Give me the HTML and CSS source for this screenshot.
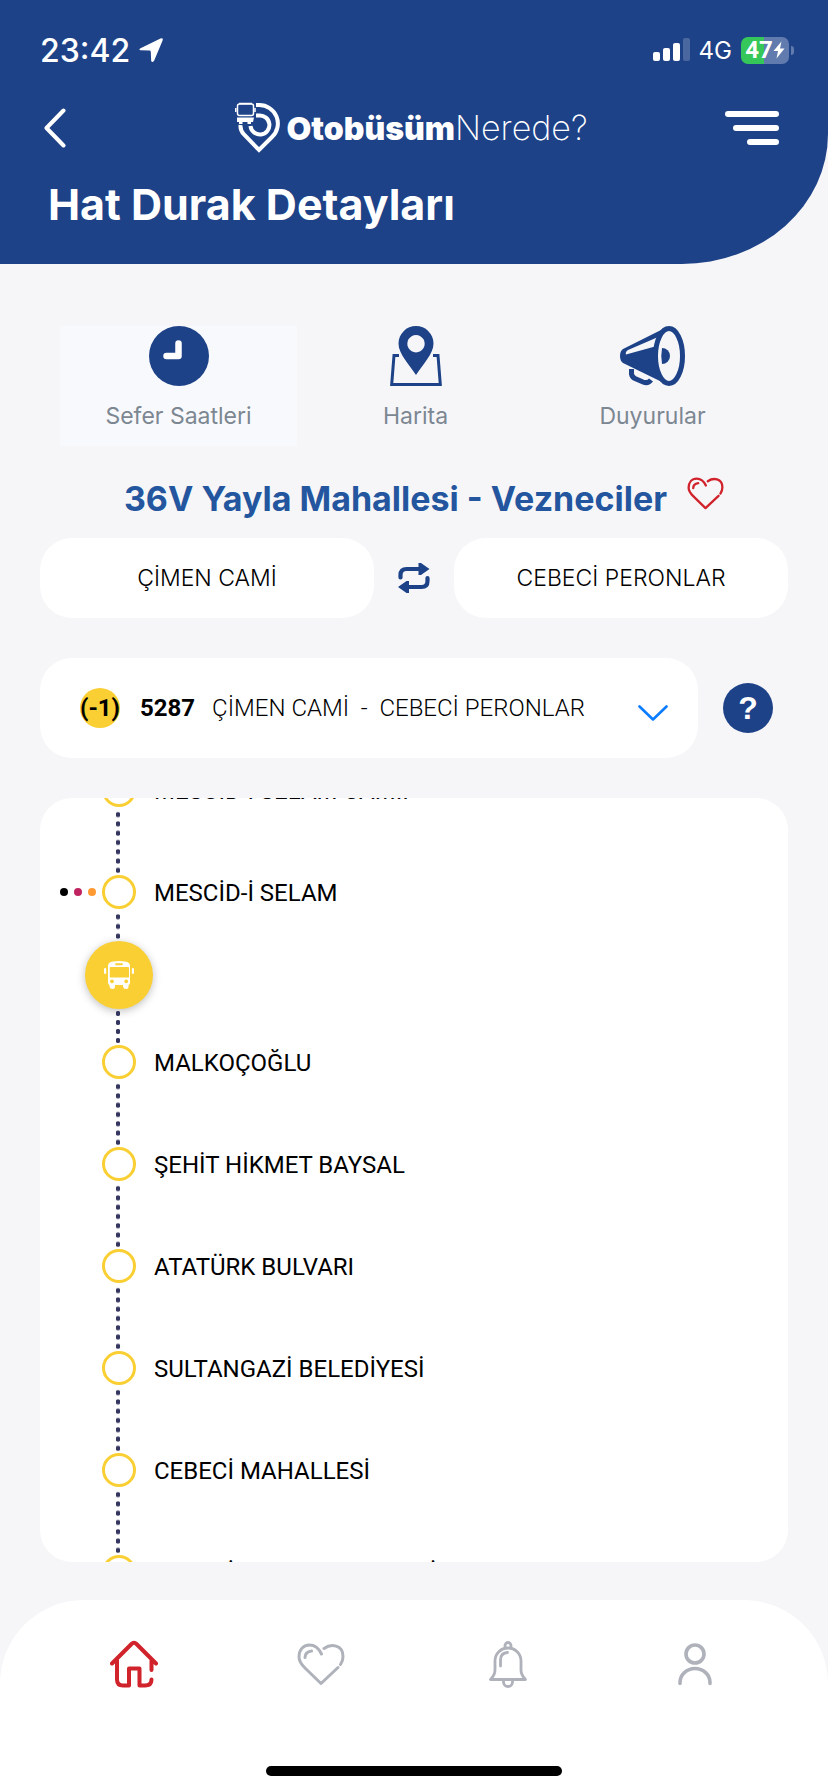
FILE: index.html
```html
<!DOCTYPE html>
<html lang="tr">
<head>
<meta charset="utf-8">
<meta name="viewport" content="width=device-width, initial-scale=1">
<title>Otobüsüm Nerede? – Hat Durak Detayları</title>
<link rel="stylesheet" href="styles.css">
</head>
<body>
<header class="header">
  <div class="status">
    <div class="status-left">
      <span class="clock">23:42</span>
      <svg class="location" width="24" height="24" viewBox="0 0 24 24" aria-hidden="true"><path d="M2 10 21.500 .6Q24.500 -.5 23.600 2.500L15.200 22.600Q14 25 12.200 23.200L11.800 14Q11.800 12.600 10.400 12.600L1.500 12.300Q-1 11.600 2 10Z" fill="#fff"/></svg>
    </div>
    <div class="status-right">
      <svg width="37" height="24" viewBox="0 0 37 24" fill="#fff" aria-hidden="true"><rect y="14" width="7" height="9" rx="2"/><rect x="10" y="10" width="7" height="13" rx="2"/><rect x="20" y="5" width="7" height="18" rx="2"/><rect x="30" width="7" height="23" rx="2" opacity=".2"/></svg>
      <span class="network">4G</span>
      <span class="battery"><span class="battery-level">47</span><svg width="12" height="18" viewBox="0 0 12 18" aria-hidden="true"><path d="M8.500 .5 .5 10H5L3.500 17.500 11.500 7.500H7Z" fill="#fff"/></svg></span>
    </div>
  </div>
  <nav class="topnav" aria-label="Üst menü">
    <button class="icon-button" type="button" aria-label="Geri"><svg width="22" height="40" viewBox="0 0 22 40" fill="none" stroke="#fff" stroke-width="4" stroke-linecap="round" stroke-linejoin="round"><path d="M19.500 2.500 2.500 20 19.500 37.500"/></svg></button>
    <a class="brand" href="#">
      <svg width="46" height="52" viewBox="0 0 46 52" fill="none" stroke="#fff" stroke-width="4" aria-hidden="true">
        <path d="M21 3h3A18.500 18.500 0 0 1 37 35L24 48 9 32.500Q5 28 5.500 23"/>
        <path d="M21 13.500h3A9.500 9.500 0 1 1 15.500 24"/>
        <rect x="2.500" y="2" width="16" height="11.500" rx="2" stroke-width="1.500"/>
        <path d="M.8 6v4M20 6v4M4 1.500h13" stroke-width="1.500"/>
        <path d="M2 15.500h17l-1 4.500h-2v2h-3.500v-2H7.500v2H4v-2H2Z" fill="#fff" stroke="none"/>
      </svg>
      <span class="brand-name"><strong>Otobüsüm</strong>Nerede?</span>
    </a>
    <button class="icon-button" type="button" aria-label="Menü"><svg width="54" height="34" viewBox="0 0 54 34" fill="#fff"><rect width="54" height="6" rx="3"/><rect x="8" y="14" width="46" height="6" rx="3"/><rect x="22" y="28" width="32" height="6" rx="3"/></svg></button>
  </nav>
  <h1 class="page-title">Hat Durak Detayları</h1>
</header>

<main class="main">
  <nav class="links" aria-label="Hat bilgileri">
    <a class="link link-active" href="#">
      <svg width="60" height="60" viewBox="0 0 60 60" aria-hidden="true"><circle cx="30" cy="30" r="30" fill="#1d4288"/><path d="M29.500 17.500V30H17.500" fill="none" stroke="#fff" stroke-width="6.500" stroke-linecap="round" stroke-linejoin="round"/></svg>
      <span>Sefer Saatleri</span>
    </a>
    <a class="link" href="#">
      <svg width="52" height="60" viewBox="0 0 52 60" aria-hidden="true"><path d="M9 29.500H4L1.700 58.500H50.300L48 29.500H43" fill="none" stroke="#1d4288" stroke-width="3"/><path fill="#1d4288" fill-rule="evenodd" d="M26 0A17.500 17.500 0 0 1 43.500 17.500C43.500 28 33 38 26 49 19 38 8.500 28 8.500 17.500A17.500 17.500 0 0 1 26 0ZM26 9a8.700 8.700 0 1 0 .01 0Z"/></svg>
      <span>Harita</span>
    </a>
    <a class="link" href="#">
      <svg width="66" height="60" viewBox="0 0 66 60" aria-hidden="true">
        <path fill="#1d4288" d="M43 3 3 23Q0 25 0 30T3 37L44 57Q37 44 37 30T43 3Z"/>
        <path fill="#f6f6f9" d="M37 11.500 8 24Q5 26 6 28.500L35 20.500Z"/>
        <ellipse cx="49" cy="30" rx="13.500" ry="27.500" fill="#f6f6f9" stroke="#1d4288" stroke-width="5"/>
        <path fill="#1d4288" d="M42 22A8 8 0 0 1 42 38Q40.500 30 42 22Z"/>
        <path d="M11.500 43V48Q12 51 15 52.500L23 56Q28 58 31 54" fill="none" stroke="#1d4288" stroke-width="5"/>
      </svg>
      <span>Duyurular</span>
    </a>
  </nav>

  <div class="route">
    <h2 class="route-name">36V Yayla Mahallesi - Vezneciler</h2>
    <button class="icon-button" type="button" aria-label="Favorilere ekle"><svg width="37" height="33" viewBox="0 0 48 43" fill="none" stroke="#d0232b" stroke-width="3" stroke-linecap="round" stroke-linejoin="round"><path d="M24.500 11C21 3.500 16.500 2 12.500 2 6 2 2 7 2 14 2 19 5 22 8 25L24 40.500 41 24.500M27 5.500C34 .5 46 1.500 46 13.500Q46 18 43.500 21.500M8 14.500Q8 9 14.500 8"/></svg></button>
  </div>

  <div class="direction">
    <button class="card terminal" type="button">ÇİMEN CAMİ</button>
    <button class="icon-button" type="button" aria-label="Yönü değiştir"><svg width="32" height="32" viewBox="0 0 32 32"><path d="M2.500 15.500V13Q2.500 7 8.500 7H21M29.500 16V19Q29.500 25 23.500 25H11" fill="none" stroke="#1d4288" stroke-width="4.200" stroke-linecap="round"/><path d="M20.500 1V13H23L31.500 7 23 1ZM11 19V31H8.500L0 25 8.500 19Z" fill="#1d4288"/></svg></button>
    <button class="card terminal" type="button">CEBECİ PERONLAR</button>
  </div>

  <div class="vehicle">
    <button class="card picker" type="button" aria-haspopup="listbox">
      <span class="delay">(-1)</span>
      <strong class="code">5287</strong>
      <span class="path">ÇİMEN CAMİ&nbsp; -&nbsp; CEBECİ PERONLAR</span>
      <svg class="chevron" width="30" height="16" viewBox="0 0 30 16" fill="none" stroke="#0a7cff" stroke-width="2.600" stroke-linecap="round" stroke-linejoin="round" aria-hidden="true"><path d="M1.500 1.500 15 14.500 28.500 1.500"/></svg>
    </button>
    <button class="help" type="button" aria-label="Yardım">?</button>
  </div>

  <ol class="card stops">
    <li class="stop"><div class="stop-row"><span class="transfers"></span><span class="ring"></span><span class="stop-name">MESCİD-İ SELAM CAMİİ</span></div><div class="dots"></div></li>
    <li class="stop">
      <div class="stop-row"><span class="transfers"><i class="line line-black"></i><i class="line line-pink"></i><i class="line line-orange"></i></span><span class="ring"></span><span class="stop-name">MESCİD-İ SELAM</span></div>
      <div class="dots dots-before-bus"></div>
      <div class="bus"><svg width="30" height="28" viewBox="0 0 30 28" role="img" aria-label="Otobüs"><path fill="#fff" fill-rule="evenodd" d="M9 .5Q15-.5 21 .5 26 1 26 5V21.500Q26 23.500 24.500 24V25.500Q24.500 28 22 28T19 25.500V24H11V25.500Q11 28 8.500 28T5.500 25.500V24Q4 23.500 4 21.500V5Q4 1 9 .5ZM11.500 2.200Q10.800 3.200 11.500 4.200H18.500Q19.200 3.200 18.500 2.200ZM6.500 6Q5.800 6 5.800 7V16.500H25V7Q25 6 24 6ZM8 18.500A1.900 1.900 0 1 0 8.010 18.500ZM22.200 18.500A1.900 1.900 0 1 0 22.210 18.500Z"/><rect y="7" width="2.200" height="6" rx="1.100" fill="#fff"/><rect x="27.800" y="7" width="2.200" height="6" rx="1.100" fill="#fff"/></svg></div>
      <div class="dots dots-after-bus"></div>
    </li>
    <li class="stop"><div class="stop-row"><span class="transfers"></span><span class="ring"></span><span class="stop-name">MALKOÇOĞLU</span></div><div class="dots"></div></li>
    <li class="stop"><div class="stop-row"><span class="transfers"></span><span class="ring"></span><span class="stop-name">ŞEHİT HİKMET BAYSAL</span></div><div class="dots"></div></li>
    <li class="stop"><div class="stop-row"><span class="transfers"></span><span class="ring"></span><span class="stop-name">ATATÜRK BULVARI</span></div><div class="dots"></div></li>
    <li class="stop"><div class="stop-row"><span class="transfers"></span><span class="ring"></span><span class="stop-name">SULTANGAZİ BELEDİYESİ</span></div><div class="dots"></div></li>
    <li class="stop"><div class="stop-row"><span class="transfers"></span><span class="ring"></span><span class="stop-name">CEBECİ MAHALLESİ</span></div><div class="dots"></div></li>
    <li class="stop"><div class="stop-row"><span class="transfers"></span><span class="ring"></span><span class="stop-name">CEBECİ SPOR KOMPLEKSİ</span></div></li>
  </ol>
</main>

<footer class="tabbar">
  <nav class="tabs" aria-label="Ana menü">
    <a class="tab tab-active" href="#" aria-label="Ana sayfa"><svg width="48" height="48" viewBox="0 0 48 48" fill="none" stroke="currentColor" stroke-width="4" stroke-linecap="round" stroke-linejoin="round"><path d="M2 23.500 21.500 4Q24 1.500 26.500 4L46 23.500M7 20V39.500Q7 45.500 13 45.500H19V28.500H29.500V45.500H35Q41.500 45.500 41.500 39.500M41.500 20.500V30"/></svg></a>
    <a class="tab" href="#" aria-label="Favoriler"><svg width="48" height="43" viewBox="0 0 48 43" fill="none" stroke="currentColor" stroke-width="3" stroke-linecap="round" stroke-linejoin="round"><path d="M24.500 11C21 3.500 16.500 2 12.500 2 6 2 2 7 2 14 2 19 5 22 8 25L24 40.500 41 24.500M27 5.500C34 .5 46 1.500 46 13.500Q46 18 43.500 21.500M8 14.500Q8 9 14.500 8"/></svg></a>
    <a class="tab" href="#" aria-label="Bildirimler"><svg width="38" height="47" viewBox="0 0 38 47" fill="none" stroke="currentColor" stroke-width="2.800" stroke-linecap="round" stroke-linejoin="round"><path d="M1.500 38.500H36.500Q32 34 32 29V20A13 13 0 0 0 6 20V29Q6 34 1.500 38.500ZM11.500 25V19Q11.500 12 18.500 11.500M16 6V4.500A3 3 0 0 1 22 4.500V6M14.500 39V41A4.500 4.500 0 0 0 23.500 41V39"/></svg></a>
    <a class="tab" href="#" aria-label="Profil"><svg width="36" height="43" viewBox="0 0 36 43" fill="none" stroke="currentColor" stroke-width="3.600" stroke-linecap="round"><circle cx="18" cy="11" r="9"/><path d="M3 40.500V39.500A15 14 0 0 1 33 39.500V40.500"/></svg></a>
  </nav>
  <div class="home-indicator"></div>
</footer>
</body>
</html>
```

FILE: styles.css
```css
:root {
  --blue: #1d4288;
  --page: #f6f6f9;
  --yellow: #f9cf33;
  --display: "Inter", "Open Sans", sans-serif;
  --body: Roboto, "Noto Sans", sans-serif;
}

* { box-sizing: border-box; }

body {
  margin: 0;
  height: 100vh;
  display: flex;
  flex-direction: column;
  background: var(--page);
  color: #000;
  font-family: var(--body);
  font-size: 24px;
}

button {
  font: inherit;
  color: inherit;
  border: 0;
  margin: 0;
  padding: 0;
  background: none;
}

a { color: inherit; text-decoration: none; }
svg { display: block; flex: none; }

.icon-button { display: flex; align-items: center; justify-content: center; }

.card { background: #fff; border-radius: 32px; }

/* Header */
.header {
  background: var(--blue);
  color: #fff;
  border-bottom-right-radius: 146px 130px;
  font-family: var(--display);
}

.status {
  height: 100px;
  padding: 0 34px 0 40px;
  display: flex;
  align-items: center;
  justify-content: space-between;
}

.status-left { display: flex; align-items: center; gap: 9px; }
.status-right { display: flex; align-items: center; gap: 9px; }
.clock { font-size: 32px; font-weight: 500; }
.network { font-size: 24px; }

.battery {
  position: relative;
  width: 48px;
  height: 27px;
  margin-right: 5px;
  border-radius: 7px;
  background: linear-gradient(90deg, #35c759 48%, #627bae 48%);
  display: flex;
  align-items: center;
  justify-content: center;
}
.battery::after {
  content: "";
  position: absolute;
  right: -5px;
  top: 9px;
  width: 3px;
  height: 9px;
  border-radius: 0 3px 3px 0;
  background: #627bae;
}
.battery-level { font-family: var(--body); font-size: 24px; line-height: 27px; font-weight: 700; }

.topnav {
  height: 56px;
  padding: 0 49px 0 44px;
  display: grid;
  grid-template-columns: 54px 1fr 54px;
  align-items: center;
}
.topnav .icon-button:first-child { justify-content: flex-start; }

.brand { display: flex; align-items: center; justify-content: center; gap: 5px; }
.brand-name {
  font-size: 34px;
  line-height: 48px;
  font-weight: 200;
}
.brand-name strong { font-size: 32px; font-weight: 900; }

.page-title {
  margin: 0;
  padding: 24px 48px 36px;
  font-size: 43px;
  line-height: 48px;
  font-weight: 700;
}

/* Content */
.main {
  flex: 1;
  min-height: 0;
  display: flex;
  flex-direction: column;
  padding: 62px 40px 38px;
}

.links {
  display: grid;
  grid-template-columns: repeat(3, 1fr);
  padding: 0 17px 0 20px;
}
.link {
  display: flex;
  flex-direction: column;
  align-items: center;
  gap: 14px;
  padding-bottom: 14px;
  color: #7c8792;
  font-family: var(--display);
  font-size: 23px;
  line-height: 32px;
}
.link-active { background: #f8f9fc; }

.route {
  display: flex;
  align-items: flex-start;
  justify-content: center;
  gap: 20px;
  padding: 31px 0 17px 20px;
}
.route-name {
  margin: 0;
  color: #23569e;
  font-family: var(--display);
  font-size: 34px;
  line-height: 44px;
  font-weight: 700;
  white-space: nowrap;
}

.direction { display: grid; grid-template-columns: 1fr 80px 1fr; }
.terminal {
  height: 80px;
  font-family: var(--display);
  font-size: 23px;
  font-weight: 300;
}

.vehicle {
  display: grid;
  grid-template-columns: 1fr 50px;
  align-items: center;
  gap: 25px;
  padding: 40px 15px 40px 0;
}
.picker {
  height: 100px;
  padding: 0 30px 0 40px;
  display: flex;
  align-items: center;
  text-align: left;
}
.delay {
  width: 40px;
  height: 40px;
  line-height: 40px;
  border-radius: 50%;
  background: var(--yellow);
  font-weight: 700;
  text-align: center;
}
.code { margin: 0 17px 0 20px; }
.path { flex: 1; font-weight: 300; }
.chevron { margin-top: 10px; }
.help {
  width: 50px;
  height: 50px;
  border-radius: 50%;
  background: var(--blue);
  color: #fff;
  font-family: "Liberation Sans", sans-serif;
  font-size: 32px;
  font-weight: 700;
}

/* Stop list, scrolled part-way past the first stop */
.stops {
  flex: 1;
  min-height: 0;
  margin: 0;
  padding: 0;
  overflow: hidden;
  list-style: none;
}
.stop:first-child { margin-top: -25px; }
.stop-row {
  height: 34px;
  display: grid;
  grid-template-columns: 62px 34px 1fr;
  grid-template-rows: 34px;
  align-items: center;
}
.transfers {
  display: flex;
  justify-content: flex-end;
  gap: 6px;
  padding-right: 6px;
}
.line { width: 8px; height: 8px; border-radius: 50%; }
.line-black { background: #000; }
.line-pink { background: #bf2460; }
.line-orange { background: #ff9a33; }
.ring {
  height: 34px;
  border: 3px solid var(--yellow);
  border-radius: 50%;
}
.stop-name { padding: 2px 0 0 18px; line-height: 34px; }

.dots {
  width: 4px;
  height: 65px;
  margin: 3px 0 0 76px;
  background: radial-gradient(circle at center, #35365f 2px, transparent 3px) 0 0 / 4px 9px round;
}
.dots-before-bus { height: 29px; }
.dots-after-bus { height: 36px; margin-top: 0; }
.bus {
  width: 68px;
  height: 68px;
  margin-left: 45px;
  border-radius: 50%;
  background: var(--yellow);
  box-shadow: 0 2px 8px rgba(0, 0, 0, .25);
  display: flex;
  align-items: center;
  justify-content: center;
}

/* Bottom navigation */
.tabbar {
  background: #fff;
  border-radius: 84px 84px 0 0;
  padding: 0 40px 16px;
}
.tabs {
  height: 128px;
  display: grid;
  grid-template-columns: repeat(4, 1fr);
}
.tab {
  display: flex;
  align-items: center;
  justify-content: center;
  color: #afb2ba;
}
.tab-active { color: #d0232b; }
.home-indicator {
  width: 296px;
  height: 10px;
  margin: 38px auto 0;
  border-radius: 5px;
  background: #000;
}
```
